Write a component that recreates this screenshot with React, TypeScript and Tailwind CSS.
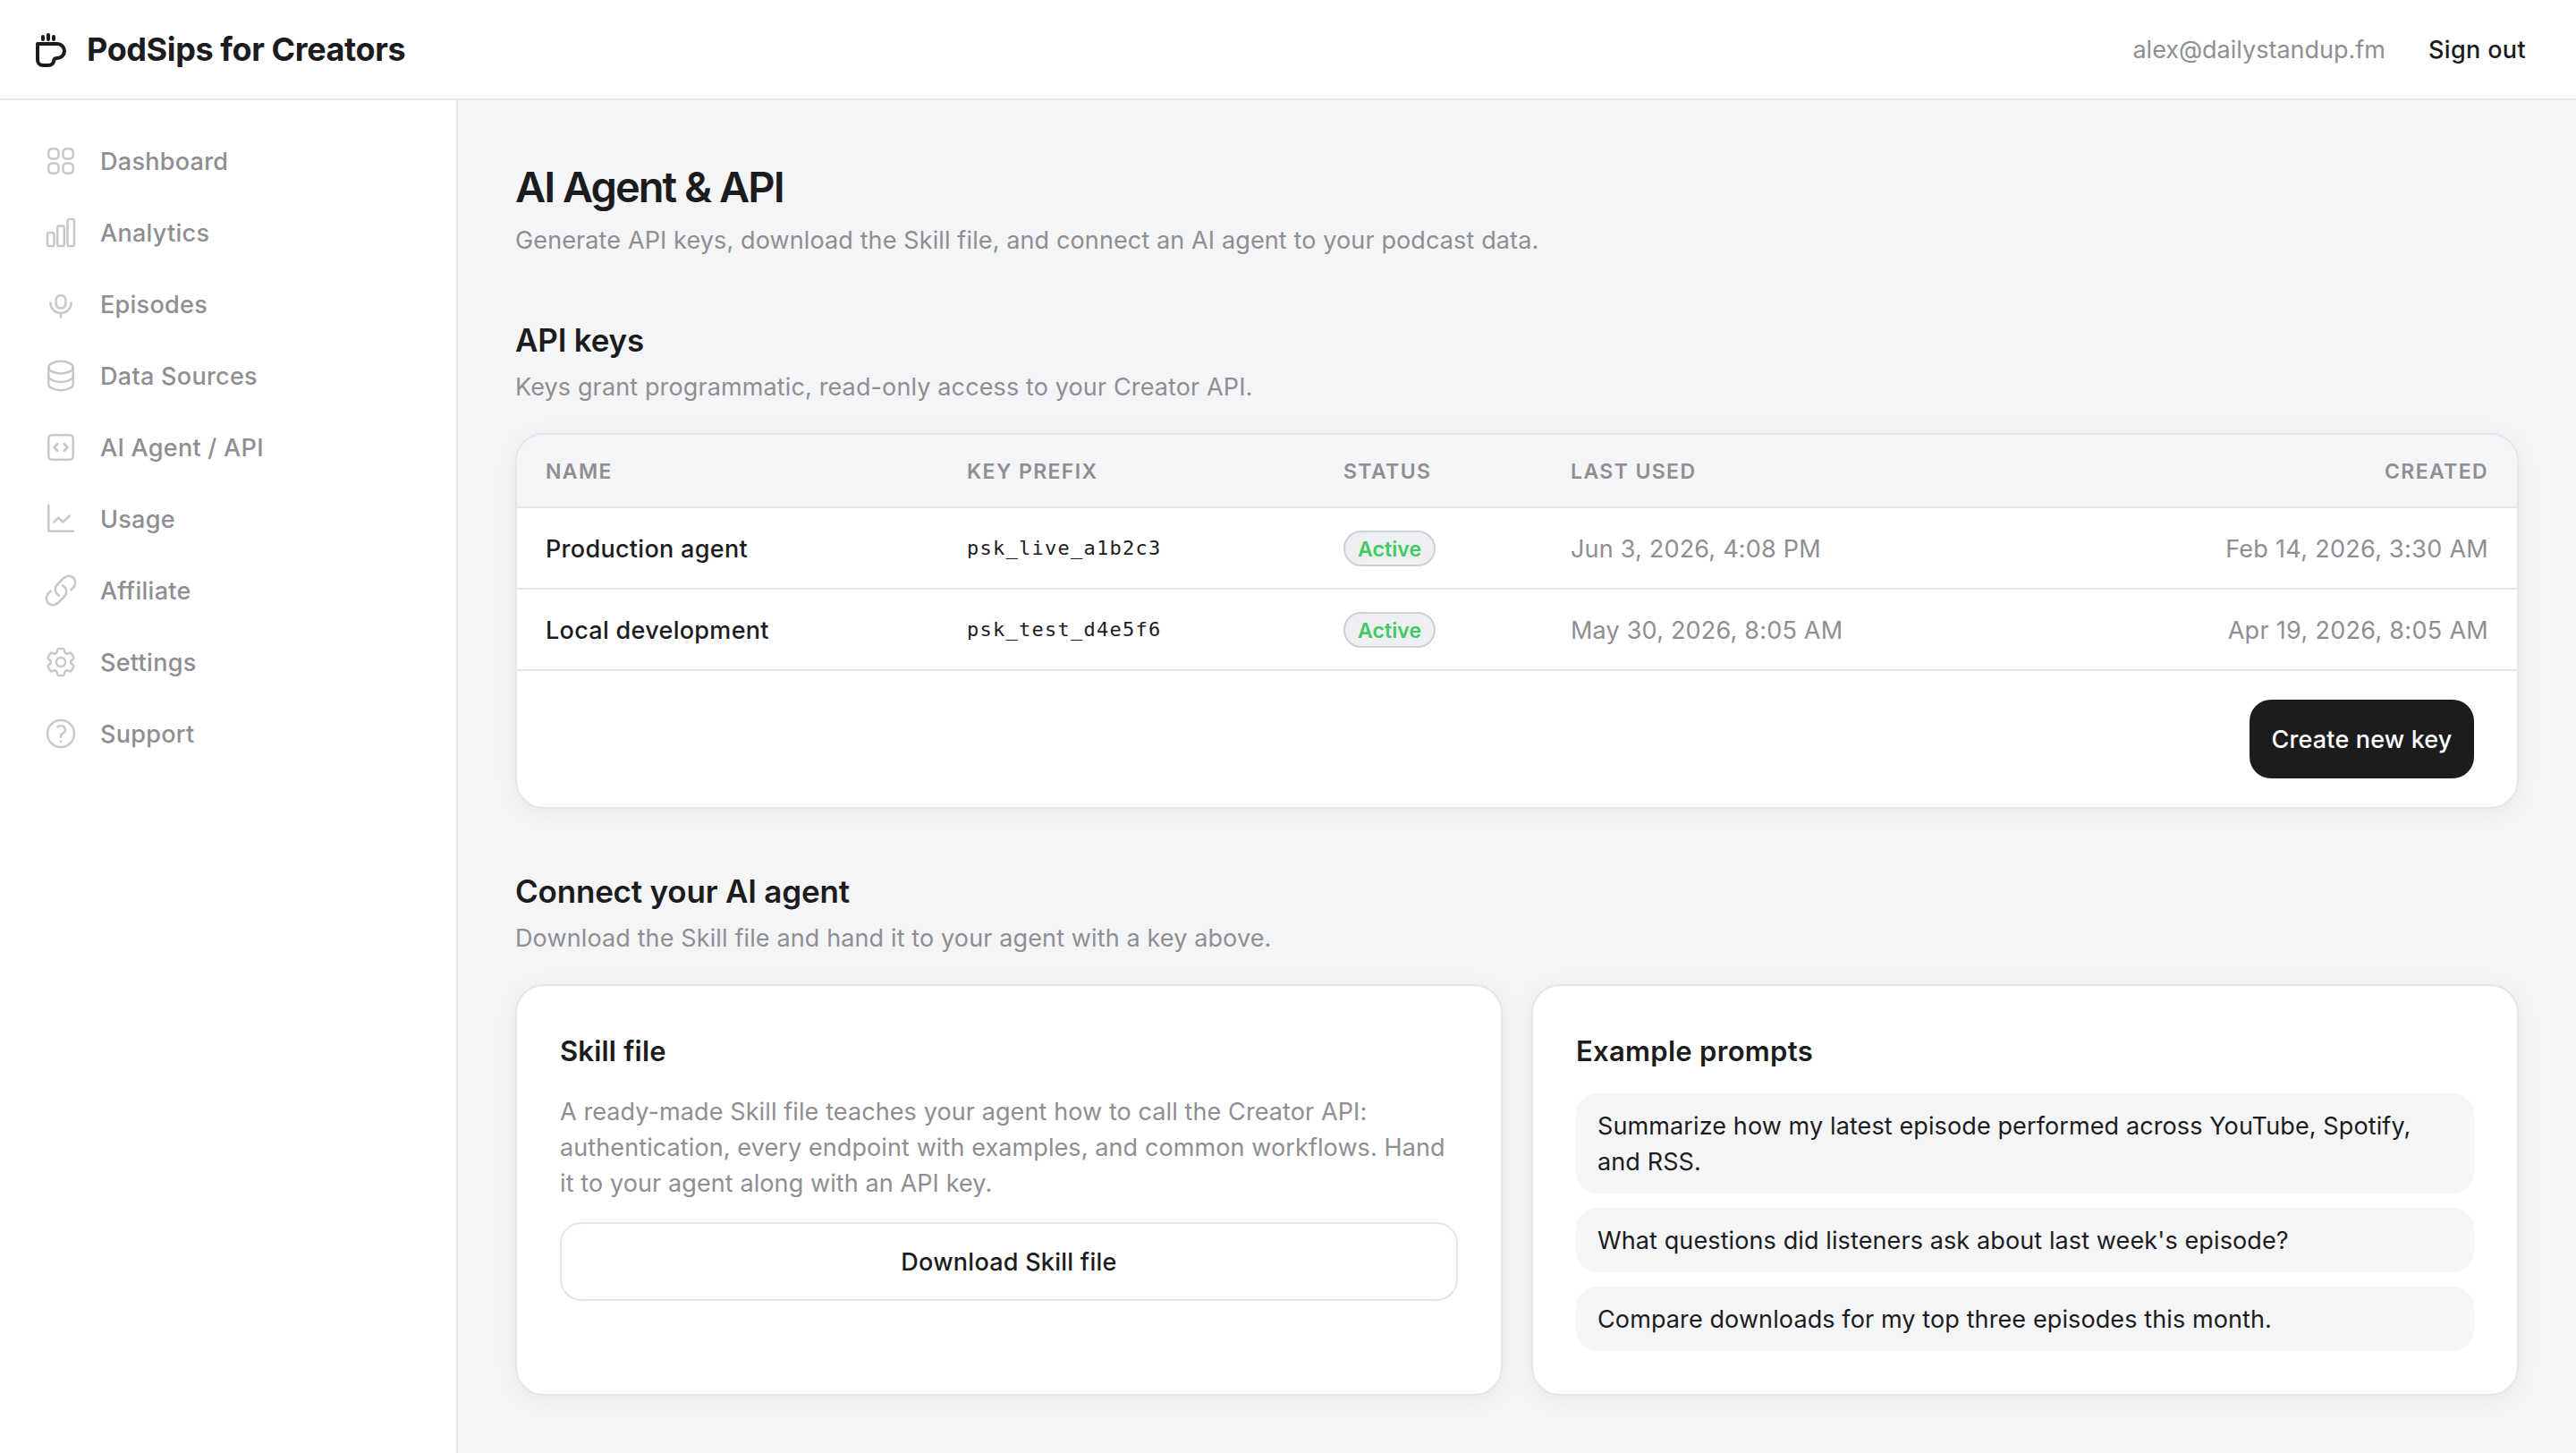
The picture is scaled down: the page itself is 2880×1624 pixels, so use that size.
import type { ComponentType, ReactNode } from "react";
import {
  HiOutlineChartBar,
  HiOutlineCodeBracketSquare,
  HiOutlineCog6Tooth,
  HiOutlineLink,
  HiOutlineQuestionMarkCircle,
  HiOutlineSquares2X2,
} from "react-icons/hi2";

type IconProps = { className?: string };

function StrokeIcon({ className, children }: IconProps & { children: ReactNode }) {
  return (
    <svg
      viewBox="0 0 24 24"
      fill="none"
      stroke="currentColor"
      strokeWidth="1.5"
      strokeLinecap="round"
      strokeLinejoin="round"
      className={className}
    >
      {children}
    </svg>
  );
}

function MicIcon({ className }: IconProps) {
  return (
    <StrokeIcon className={className}>
      <path d="M19 11a7 7 0 0 1-14 0m7 7v2.75" />
      <rect x="8.75" y="6" width="6.5" height="8.75" rx="3.25" />
    </StrokeIcon>
  );
}

function DatabaseIcon({ className }: IconProps) {
  return (
    <StrokeIcon className={className}>
      <ellipse cx="12" cy="6.375" rx="8.25" ry="4.125" />
      <path d="M3.75 6.375v11.250c0 2.278 3.694 4.125 8.25 4.125s8.25-1.847 8.25-4.125V6.375" />
      <path d="M3.75 12c0 2.278 3.694 4.125 8.25 4.125s8.25-1.847 8.25-4.125" />
    </StrokeIcon>
  );
}

function UsageIcon({ className }: IconProps) {
  return (
    <StrokeIcon className={className}>
      <path d="M3.75 3v16.5c0 .41.34.75.75.75h15.75" />
      <path d="M7.5 14.1l2.8-2.9 3.1 2.9 4.5-4.2" />
    </StrokeIcon>
  );
}

function Logo() {
  return (
    <svg viewBox="0 0 40 40" fill="none" stroke="#1c1c1e" className="size-10">
      <path
        d="M6 14h22a8 8 0 0 1 0 16c-2 0-3.4.3-3.6 2.4C23.8 35.8 21.5 38 18 38h-6a6 6 0 0 1-6-6V14z"
        strokeWidth="4"
        strokeLinejoin="round"
      />
      <path d="M12 6v3M18 4v5M24 6v3" strokeWidth="4" strokeLinecap="round" />
    </svg>
  );
}

const navItems: { label: string; icon: ComponentType<IconProps> }[] = [
  { label: "Dashboard", icon: HiOutlineSquares2X2 },
  { label: "Analytics", icon: HiOutlineChartBar },
  { label: "Episodes", icon: MicIcon },
  { label: "Data Sources", icon: DatabaseIcon },
  { label: "AI Agent / API", icon: HiOutlineCodeBracketSquare },
  { label: "Usage", icon: UsageIcon },
  { label: "Affiliate", icon: HiOutlineLink },
  { label: "Settings", icon: HiOutlineCog6Tooth },
  { label: "Support", icon: HiOutlineQuestionMarkCircle },
];

const apiKeys = [
  {
    name: "Production agent",
    prefix: "psk_live_a1b2c3",
    status: "Active",
    lastUsed: "Jun 3, 2026, 4:08 PM",
    created: "Feb 14, 2026, 3:30 AM",
  },
  {
    name: "Local development",
    prefix: "psk_test_d4e5f6",
    status: "Active",
    lastUsed: "May 30, 2026, 8:05 AM",
    created: "Apr 19, 2026, 8:05 AM",
  },
];

const prompts = [
  "Summarize how my latest episode performed across YouTube, Spotify, and RSS.",
  "What questions did listeners ask about last week's episode?",
  "Compare downloads for my top three episodes this month.",
];

function SectionHeading({ title, text }: { title: string; text: string }) {
  return (
    <div className="mb-[31px]">
      <h2 className="mb-[5px] text-[35px] leading-[56px] font-semibold tracking-[-0.2px]">
        {title}
      </h2>
      <p className="text-[#8e8e93] tracking-[0.125px]">{text}</p>
    </div>
  );
}

function Card({ children }: { children: ReactNode }) {
  return (
    <div className="rounded-[32px] border-2 border-[#e5e5ea] bg-white p-12 shadow-[0_4px_24px_rgba(0,0,0,0.05)]">
      {children}
    </div>
  );
}

function Header() {
  return (
    <header className="flex h-28 items-center justify-between border-b-2 border-[#e5e5ea] bg-white pr-14 pl-9">
      <div className="flex items-center gap-[21px]">
        <Logo />
        <span className="text-[36px] font-bold tracking-[-0.4px]">
          PodSips for Creators
        </span>
      </div>
      <div className="flex items-center gap-12 pt-0.5">
        <span className="text-[#8e8e93]">alex@dailystandup.fm</span>
        <button className="font-medium tracking-[0.36px]">Sign out</button>
      </div>
    </header>
  );
}

function Sidebar() {
  return (
    <aside className="w-[512px] shrink-0 border-r-2 border-[#e5e5ea] bg-white">
      <nav className="flex flex-col gap-2 px-8 py-8">
        {navItems.map(({ label, icon: Icon }) => (
          <a key={label} className="flex h-[72px] items-center gap-6 px-4">
            <Icon className="size-10 text-[#c5c9cb]" />
            <span className="pt-0.5 font-medium text-[#8e8e93] tracking-[0.28px]">
              {label}
            </span>
          </a>
        ))}
      </nav>
    </aside>
  );
}

function KeysTable() {
  return (
    <div className="overflow-hidden rounded-[32px] border-2 border-[#e5e5ea] bg-white shadow-[0_4px_24px_rgba(0,0,0,0.05)]">
      <div className="grid h-[82px] grid-cols-[471px_421px_254px_1fr] items-center border-b-2 border-[#e5e5ea] bg-[#f4f5f7] pt-0.5 text-[23px] font-semibold text-[#8e8e93] tracking-[1.4px]">
        <span className="px-8">NAME</span>
        <span className="px-8">KEY PREFIX</span>
        <span className="px-8">STATUS</span>
        <div className="flex justify-between px-8">
          <span>LAST USED</span>
          <span>CREATED</span>
        </div>
      </div>
      {apiKeys.map((k) => (
        <div
          key={k.prefix}
          className="grid h-[91px] grid-cols-[471px_421px_254px_1fr] items-center border-b-2 border-[#e5e5ea]"
        >
          <span className="px-8 pt-0.5 font-medium tracking-[0.3px]">
            {k.name}
          </span>
          <span className="px-8 pt-px font-['DejaVu_Sans_Mono',monospace] text-[22px] tracking-[1.25px]">
            {k.prefix}
          </span>
          <div className="flex px-8">
            <span className="flex h-10 items-center rounded-full border-2 border-[#cdd0d2] bg-[#eeeff2] px-3.5 pt-0.5 text-[23px] font-semibold text-[#3fcb62] tracking-[0.1px]">
              {k.status}
            </span>
          </div>
          <div className="flex justify-between px-8 pt-0.5 text-[#8e8e93] tracking-[0.2px]">
            <span>{k.lastUsed}</span>
            <span className="tracking-[0.3px]">{k.created}</span>
          </div>
        </div>
      ))}
      <div className="flex justify-end px-12 py-8">
        <button className="h-[88px] w-[251px] rounded-3xl bg-[#1c1c1e] pt-0.5 font-medium text-white tracking-[0.17px]">
          Create new key
        </button>
      </div>
    </div>
  );
}

export default function App() {
  return (
    <div className="flex h-[1624px] flex-col overflow-hidden bg-[#f4f5f7] font-['Inter',sans-serif] text-[27px] leading-10 text-[#1c1c1e]">
      <Header />
      <div className="flex flex-1">
        <Sidebar />
        <main className="flex-1 px-16 pt-[65px]">
          <h1 className="mb-2 text-[47px] leading-[64px] font-semibold tracking-[-1.98px]">
            AI Agent &amp; API
          </h1>
          <p className="mb-[63px] text-[#8e8e93] tracking-[0.12px]">
            Generate API keys, download the Skill file, and connect an AI agent
            to your podcast data.
          </p>

          <section className="mb-16">
            <SectionHeading
              title="API keys"
              text="Keys grant programmatic, read-only access to your Creator API."
            />
            <KeysTable />
          </section>

          <section>
            <SectionHeading
              title="Connect your AI agent"
              text="Download the Skill file and hand it to your agent with a key above."
            />
            <div className="grid grid-cols-2 gap-8">
              <Card>
                <h3 className="mb-6 pt-px text-[31px] leading-[48px] font-semibold tracking-[0.2px]">
                  Skill file
                </h3>
                <p className="mb-[23px] text-[#8e8e93] tracking-[0.1px]">
                  A ready-made Skill file teaches your agent how to call the
                  Creator API: authentication, every endpoint with examples, and
                  common workflows. Hand it to your agent along with an API key.
                </p>
                <button className="h-[88px] w-full rounded-3xl border-2 border-[#e5e5ea] pt-0.5 font-medium tracking-[0.25px]">
                  Download Skill file
                </button>
              </Card>
              <Card>
                <h3 className="mb-[23px] pt-px text-[31px] leading-[48px] font-semibold tracking-[0.3px]">
                  Example prompts
                </h3>
                <ul className="flex flex-col gap-4">
                  {prompts.map((p) => (
                    <li
                      key={p}
                      className="rounded-3xl bg-[#f4f5f7] px-6 pt-[17px] pb-[15px] tracking-[0.11px]"
                    >
                      {p}
                    </li>
                  ))}
                </ul>
              </Card>
            </div>
          </section>
        </main>
      </div>
    </div>
  );
}
